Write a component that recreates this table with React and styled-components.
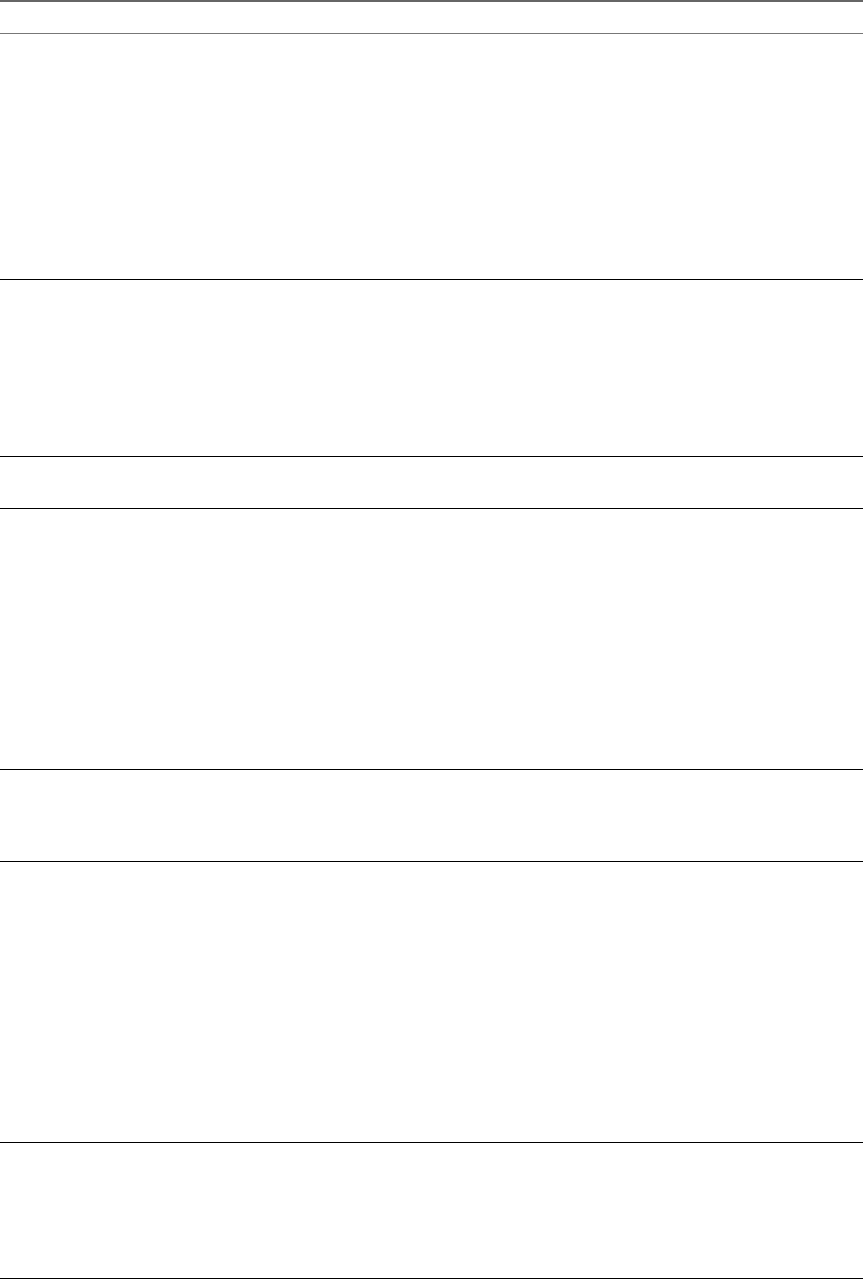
import React from "react";
import styled, {createGlobalStyle} from "styled-components";

const GlobalStyle = createGlobalStyle`
  html, body {
    margin: 0;
    padding: 0;
    background: #ffffff;
    font-family: "Liberation Sans", Arial, sans-serif;
  }
`

const Table = styled.div`
  width: 863px;
  display: flex;
  flex-direction: column;
`

const HeaderRow = styled.div`
  height: 34px;
  box-sizing: border-box;
  border-top: 2px solid #666666;
  border-bottom: 1px solid #777777;
`

const Row = styled.div`
  height: ${props => props.$height}px;
  box-sizing: border-box;
  border-bottom: 1px solid #000000;
`

const rows = [246, 177, 52, 261, 92, 281, 136]

const App = () => {
    return (
        <>
            <GlobalStyle/>
            <Table>
                <HeaderRow/>
                {rows.map((h, i) => (
                    <Row key={i} $height={h}/>
                ))}
            </Table>
        </>
    )
}

export default App
